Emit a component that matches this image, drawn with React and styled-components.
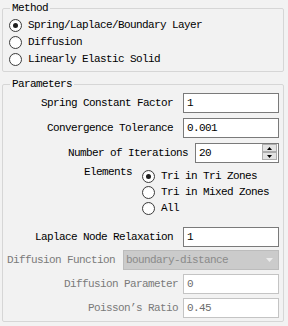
import React from 'react';
import styled, { createGlobalStyle } from 'styled-components';

const GlobalStyle = createGlobalStyle`
  html, body {
    margin: 0;
    padding: 0;
    background: #f2f2f2;
  }
  body {
    font-family: "Liberation Mono", "Noto Sans CJK SC", monospace;
    font-size: 11px;
    letter-spacing: -0.6px;
    color: #000;
  }
`;

const Panel = styled.div`
  width: 282px;
  padding: 2px 4px 0 2px;
  display: flex;
  flex-direction: column;
  gap: 6px;
`;

const Group = styled.fieldset`
  margin: 0;
  min-width: 0;
  padding: ${(p) => p.$pad};
  border: 1px solid #d6d6d6;
  border-radius: 2px;
  display: flex;
  flex-direction: column;
  gap: ${(p) => p.$gap || 0}px;
`;

const Title = styled.legend`
  margin-left: 3px;
  padding: 0 2px;
  height: 12px;
  line-height: 12px;
`;

const RadioRow = styled.label`
  display: flex;
  align-items: center;
  gap: 6px;
  height: 16px;
  padding-left: ${(p) => p.$indent || 0}px;
  white-space: pre;
`;

const Circle = styled.span`
  width: 13px;
  height: 13px;
  box-sizing: border-box;
  border-radius: 50%;
  border: 1px solid #3c3c3c;
  background: radial-gradient(circle at 50% 60%, #ffffff 55%, #e4e4e4 100%);
  display: flex;
  align-items: center;
  justify-content: center;
  flex-shrink: 0;

  &::after {
    content: '';
    width: 5px;
    height: 5px;
    border-radius: 50%;
    background: ${(p) => (p.$on ? '#1e1e1e' : 'transparent')};
  }
`;

const Row = styled.div`
  display: flex;
  justify-content: flex-end;
  align-items: center;
  gap: ${(p) => p.$gap}px;
  margin-top: ${(p) => p.$mt || 0}px;
`;

const Label = styled.span`
  white-space: pre;
  color: ${(p) => (p.$off ? '#7a7a7a' : '#000')};
  align-self: ${(p) => (p.$top ? 'flex-start' : 'center')};
  margin-top: ${(p) => (p.$top ? '-2px' : '0')};
  line-height: 12px;
`;

const Field = styled.input`
  width: 96px;
  height: 20px;
  box-sizing: border-box;
  margin: 0;
  padding: 0 3px;
  border: 1px solid #7a7a7a;
  background: #fff;
  font: inherit;
  letter-spacing: inherit;
  color: #000;
  outline: none;

  &:disabled {
    border-color: #c4c4c4;
    color: #6d6d6d;
    background: #fff;
  }
`;

const Spin = styled.div`
  width: 84px;
  height: 20px;
  box-sizing: border-box;
  border: 1px solid #7a7a7a;
  background: #fff;
  display: flex;
  align-items: flex-start;
  padding: 0 1px 0 3px;
`;

const SpinValue = styled.span`
  flex: 1;
  line-height: 18px;
`;

const SpinButtons = styled.div`
  display: flex;
  flex-direction: column;
  width: 15px;
`;

const SpinButton = styled.div`
  height: 8px;
  box-sizing: border-box;
  border: 1px solid #adadad;
  background: #e3e3e3;
  display: flex;
  align-items: center;
  justify-content: center;
`;

const Combo = styled.div`
  width: 156px;
  height: 20px;
  box-sizing: border-box;
  border: 1px solid #bcbcbc;
  background: #cbcbcb;
  color: #8a8a8a;
  display: flex;
  align-items: center;
  justify-content: space-between;
  padding: 0 5px 0 2px;
`;

const Choices = styled.div`
  width: 137px;
  display: flex;
  flex-direction: column;
`;

const Arrow = ({ up, color = '#000', w = 5, h = 3 }) => (
  <svg width={w} height={h} viewBox={`0 0 ${w} ${h}`}>
    <polygon
      points={up ? `0,${h} ${w / 2},0 ${w},${h}` : `0,0 ${w},0 ${w / 2},${h}`}
      fill={color}
    />
  </svg>
);

const Radio = ({ on, indent, children }) => (
  <RadioRow $indent={indent}>
    <Circle $on={on} />
    {children}
  </RadioRow>
);

export default function App() {
  return (
    <>
      <GlobalStyle />
      <Panel>
        <Group $pad="3px 4px 4px 4px" $gap={1}>
          <Title>Method</Title>
          <Radio on indent={2}>Spring/Laplace/Boundary Layer</Radio>
          <Radio indent={2}>Diffusion</Radio>
          <Radio indent={2}>Linearly Elastic Solid</Radio>
        </Group>

        <Group $pad="3px 4px 3px 4px">
          <Title>Parameters</Title>
          <Row $gap={10}>
            <Label>Spring Constant Factor</Label>
            <Field defaultValue="1" />
          </Row>
          <Row $gap={10} $mt={5}>
            <Label>Convergence Tolerance</Label>
            <Field defaultValue="0.001" />
          </Row>
          <Row $gap={7} $mt={5}>
            <Label>Number of Iterations</Label>
            <Spin>
              <SpinValue>20</SpinValue>
              <SpinButtons>
                <SpinButton>
                  <Arrow up />
                </SpinButton>
                <SpinButton>
                  <Arrow />
                </SpinButton>
              </SpinButtons>
            </Spin>
          </Row>
          <Row $gap={10} $mt={5}>
            <Label $top>Elements</Label>
            <Choices>
              <Radio on>Tri in Tri Zones</Radio>
              <Radio>Tri in Mixed Zones</Radio>
              <Radio>All</Radio>
            </Choices>
          </Row>
          <Row $gap={10} $mt={11}>
            <Label>Laplace Node Relaxation</Label>
            <Field defaultValue="1" />
          </Row>
          <Row $gap={8} $mt={3}>
            <Label $off>Diffusion Function</Label>
            <Combo>
              <span>boundary-distance</span>
              <Arrow color="#ececec" w={7} h={4} />
            </Combo>
          </Row>
          <Row $gap={5} $mt={4}>
            <Label $off>Diffusion Parameter</Label>
            <Field disabled defaultValue="0" />
          </Row>
          <Row $gap={5} $mt={4}>
            <Label $off>Poisson’s Ratio</Label>
            <Field disabled defaultValue="0.45" />
          </Row>
        </Group>
      </Panel>
    </>
  );
}
